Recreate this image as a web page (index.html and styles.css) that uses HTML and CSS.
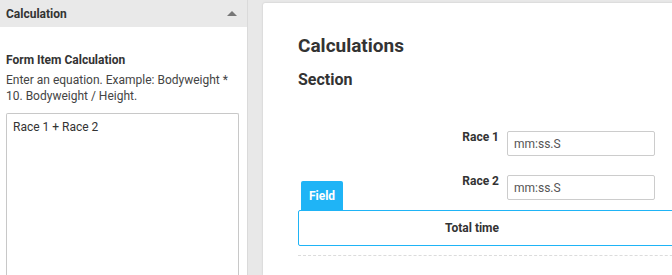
FILE: index.html
```
<!DOCTYPE html>
<html>
<head>
<meta charset="utf-8">
<link rel="stylesheet" href="styles.css">
</head>
<body>
<aside class="sidebar">
  <div class="panel-header">
    <span class="panel-title">Calculation</span>
    <span class="caret"></span>
  </div>
  <div class="panel-body">
    <div class="field-title">Form Item Calculation</div>
    <div class="field-desc">Enter an equation. Example: Bodyweight * 10. Bodyweight / Height.</div>
    <textarea class="equation">Race 1 + Race 2</textarea>
  </div>
</aside>
<main class="main">
  <section class="card">
    <h1 class="card-title">Calculations</h1>
    <h2 class="section-title">Section</h2>
    <div class="form-row">
      <label class="row-label">Race 1</label>
      <input class="row-input" type="text" placeholder="mm:ss.S">
    </div>
    <div class="form-row">
      <label class="row-label">Race 2</label>
      <input class="row-input" type="text" placeholder="mm:ss.S">
    </div>
    <div class="calc-box">
      <span class="tab">Field</span>
      <span class="row-label calc-label">Total time</span>
    </div>
    <div class="divider"></div>
  </section>
</main>
</body>
</html>
```
FILE: styles.css
```
* { box-sizing: border-box; }
html, body { margin: 0; height: 275px; overflow: hidden; }
body {
  display: flex;
  background: #e8e8e8;
  font-family: Roboto, "Liberation Sans", sans-serif;
  color: #333;
  font-size: 12px;
}
.sidebar {
  width: 248px;
  flex: none;
  background: #fff;
  border-right: 1px solid #dadada;
  height: 275px;
  overflow: hidden;
}
.panel-header {
  height: 27px;
  background: #e9e9e9;
  display: flex;
  align-items: center;
  justify-content: space-between;
  padding: 0 10px 0 6px;
}
.panel-title { font-weight: 700; font-size: 12px; color: #333; }
.caret {
  width: 0; height: 0;
  border-left: 5px solid transparent;
  border-right: 5px solid transparent;
  border-bottom: 5px solid #777;
}
.panel-body { padding: 26px 8px 0 6px; }
.field-title { font-weight: 700; line-height: 14px; }
.field-desc { margin-top: 5px; line-height: 16px; color: #444; }
.equation {
  display: block;
  margin-top: 9px;
  width: 233px;
  height: 175px;
  border: 1px solid #c8c8c8;
  border-bottom: none;
  border-radius: 2px 2px 0 0;
  padding: 6px 6px;
  font-family: Roboto, "Liberation Sans", sans-serif;
  font-size: 12px;
  line-height: 14px;
  color: #333;
  resize: none;
}
.main {
  flex: 1;
  padding: 3px 0 0 15px;
  height: 275px;
  overflow: hidden;
}
.card {
  background: #fff;
  width: 460px;
  height: 272px;
  box-shadow: 0 0 2px rgba(0,0,0,0.18);
  border-radius: 2px 0 0 0;
  padding: 32px 0 0 35px;
}
.card-title { margin: 0; font-size: 19px; line-height: 22px; font-weight: 700; color: #333; }
.section-title { margin: 14px 0 0; font-size: 16px; line-height: 18px; font-weight: 700; color: #333; }
.form-row { display: flex; align-items: flex-start; margin-top: 42px; }
.form-row + .form-row { margin-top: 19px; }
.row-label {
  width: 201px;
  text-align: right;
  font-weight: 700;
  line-height: 14px;
  color: #333;
}
.form-row .row-label { margin-top: -1px; }
.row-input {
  margin-left: 8px;
  width: 148px;
  height: 25px;
  border: 1px solid #ccc;
  border-radius: 2px;
  padding: 0 6px;
  font-family: Roboto, "Liberation Sans", sans-serif;
  font-size: 12px;
  color: #333;
}
.row-input::placeholder { color: #555; }
.calc-box {
  position: relative;
  margin-top: 10px;
  width: 420px;
  height: 36px;
  border: 1px solid #1fb4f6;
  border-radius: 2px;
  display: flex;
  align-items: center;
}
.calc-label { width: 200px; }
.tab {
  position: absolute;
  left: 2px;
  top: -30px;
  width: 42px;
  height: 29px;
  background: #1fb4f6;
  color: #fff;
  font-weight: 700;
  border-radius: 2px 2px 0 0;
  display: flex;
  align-items: center;
  justify-content: center;
  padding-top: 1px;
}
.divider {
  margin-top: 9px;
  width: 420px;
  border-top: 1px dashed #dcdcdc;
}
```
